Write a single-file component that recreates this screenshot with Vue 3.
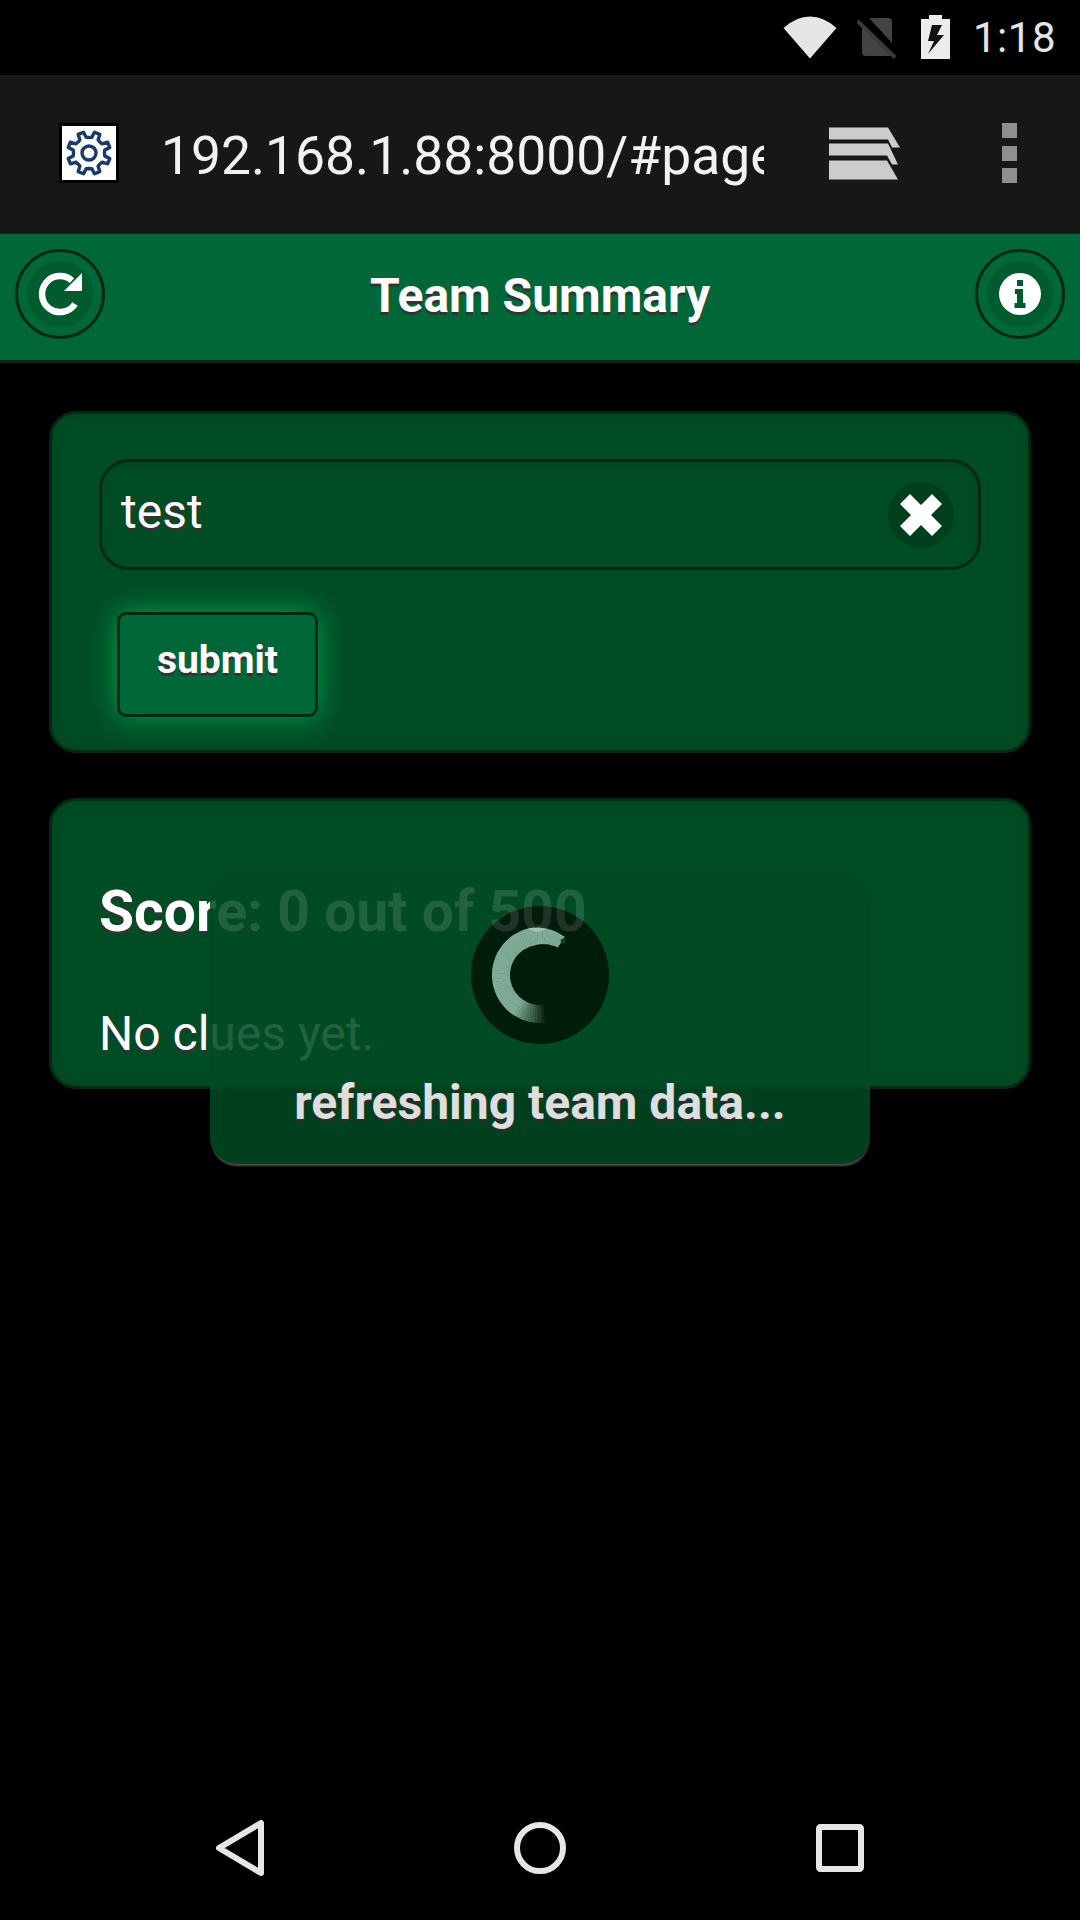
<script setup>
const gearPoints = (() => {
  const pts = []
  const teeth = 8
  for (let i = 0; i < teeth; i++) {
    const a = (i / teeth) * Math.PI * 2 + Math.PI / 8
    const step = (Math.PI * 2) / teeth
    const profile = [
      [-0.5, 15.5],
      [-0.27, 16],
      [-0.17, 21.5],
      [0.17, 21.5],
      [0.27, 16],
    ]
    for (const [d, r] of profile) {
      const t = a + d * step
      pts.push(`${(30 + r * Math.cos(t)).toFixed(2)},${(29 + r * Math.sin(t)).toFixed(2)}`)
    }
  }
  return pts.join(' ')
})()

const spinnerSegments = (() => {
  const segs = []
  const n = 60
  const start = 33
  const end = -186
  const r = 39
  const cx = 69
  const cy = 69
  for (let i = 0; i < n; i++) {
    const a0 = start + ((end - start) * i) / n
    const a1 = start + ((end - start) * (i + 1.15)) / n
    const toXY = (a) => {
      const rad = (a * Math.PI) / 180
      return [cx + r * Math.sin(rad), cy - r * Math.cos(rad)]
    }
    const p0 = toXY(a0)
    const p1 = toXY(a1)
    const f = i / n
    const opacity = f > 0.8 ? Math.max(0.05, 1 - (f - 0.8) / 0.2) : 1
    const width = 13 + Math.min(f * 5, 1) * 5
    segs.push({
      d: `M${p0[0].toFixed(2)} ${p0[1].toFixed(2)} A${r} ${r} 0 0 0 ${p1[0].toFixed(2)} ${p1[1].toFixed(2)}`,
      opacity,
      width,
    })
  }
  return segs
})()
</script>

<template>
  <div class="screen">
    <div class="status">
      <svg class="st-wifi" width="54" height="43" viewBox="0 0 54 43">
        <path d="M27 42.5 L0.5 12 Q13 0.5 27 0.5 Q41 0.5 53.5 12 Z" fill="#e6e6e6" />
      </svg>
      <svg class="st-sim" width="40" height="44" viewBox="0 0 40 44">
        <path d="M5 9 L5 36 Q5 40 9 40 L31 40 Q35 40 35 37 Z M12 2 L31 2 Q35 2 35 6 L35 27 Z" fill="#444" />
        <path d="M0.5 5 L38 41.5" stroke="#3a3a3a" stroke-width="4" />
      </svg>
      <svg class="st-batt" width="29" height="44" viewBox="0 0 29 44">
        <path d="M8 0 H21 V4 H29 V44 H0 V4 H8 Z" fill="#ececec" />
        <path d="M21 10 H11 L7 26 H13 L7 39 L23 20 H16 Z" fill="#111" />
      </svg>
      <span class="st-time">1:18</span>
    </div>

    <div class="chrome">
      <div class="favicon">
        <svg width="54" height="54" viewBox="3 2 54 54">
          <polygon :points="gearPoints" fill="none" stroke="#1b3a6b" stroke-width="3.4" stroke-linejoin="round" />
          <circle cx="30" cy="29" r="7" fill="none" stroke="#1b3a6b" stroke-width="3.4" />
        </svg>
      </div>
      <div class="url">192.168.1.88:8000/#page</div>
      <svg class="tabs" width="72" height="55" viewBox="0 0 72 54">
        <path d="M0 1 H59 L71 21 H63 L59 13 H0 Z" fill="#ccc" />
        <path d="M0 17 H59 L69 38 H63 L58 29 H0 Z" fill="#ccc" />
        <path d="M0 34 H58 L69 53 H0 Z" fill="#ccc" />
      </svg>
      <div class="menu"><i></i><i></i><i></i></div>
    </div>

    <header class="header">
      <div class="round-btn">
        <svg width="84" height="84" viewBox="3 3 84 84">
          <circle cx="45" cy="45" r="33" fill="#005c2e" />
          <path d="M60 55 A18 18 0 1 1 57 31.6" fill="none" stroke="#fff" stroke-width="6.5" />
          <path d="M67 24 V42 H49 Z" fill="#fff" />
        </svg>
      </div>
      <h1 class="title">Team Summary</h1>
      <div class="round-btn">
        <svg width="84" height="84" viewBox="3 3 84 84">
          <circle cx="45" cy="45" r="33" fill="#005c2e" />
          <circle cx="45" cy="45" r="21" fill="#fff" />
          <path d="M42 31 H48 V37 H42 Z M40 40 H48 V54 H50.5 V59 H39.5 V54 H42 V45 H40 Z" fill="#005c2e" />
        </svg>
      </div>
    </header>

    <main class="content">
      <section class="card form-card">
        <div class="input">
          <span class="input-text">test</span>
          <span class="clear">
            <svg width="42" height="42" viewBox="0 0 42 42">
              <path d="M10 0 L21 11 L32 0 L42 10 L31 21 L42 32 L32 42 L21 31 L10 42 L0 32 L11 21 L0 10 Z" fill="#fff" />
            </svg>
          </span>
        </div>
        <button class="submit">submit</button>
      </section>

      <section class="card score-card">
        <h2 class="score">Score: 0 out of 500</h2>
        <p class="clues">No clues yet.</p>
      </section>
    </main>

    <nav class="nav">
      <svg width="52" height="60" viewBox="0 0 52 60">
        <path d="M47 5 V55 L5 30 Z" fill="none" stroke="#e6e6e6" stroke-width="6" stroke-linejoin="round" />
      </svg>
      <svg width="52" height="52" viewBox="0 0 52 52">
        <circle cx="26" cy="26" r="23" fill="none" stroke="#e6e6e6" stroke-width="6" />
      </svg>
      <svg width="48" height="48" viewBox="0 0 48 48">
        <rect x="3" y="3" width="42" height="42" rx="1.5" fill="none" stroke="#e6e6e6" stroke-width="6" />
      </svg>
    </nav>

    <div class="loader">
      <div class="spinner">
        <svg width="138" height="138" viewBox="0 0 138 138">
          <path
            v-for="(s, i) in spinnerSegments"
            :key="i"
            :d="s.d"
            fill="none"
            stroke="#93bba9"
            :stroke-width="s.width"
            :opacity="s.opacity"
          />
          <circle cx="92" cy="35" r="2.5" fill="#1d3a2c" />
        </svg>
      </div>
      <div class="loader-text">refreshing team data...</div>
    </div>
  </div>
</template>

<style scoped>
.screen {
  position: relative;
  width: 1080px;
  height: 1920px;
  background: #000;
  display: flex;
  flex-direction: column;
  overflow: hidden;
  font-family: Roboto, "Liberation Sans", sans-serif;
  color: #fff;
}
.status {
  height: 75px;
  flex: none;
  display: flex;
  align-items: center;
  justify-content: flex-end;
  padding-right: 24px;
  box-sizing: border-box;
}
.st-wifi { margin-right: 20px; margin-top: -1px; }
.st-sim { margin-right: 24px; }
.st-batt { margin-right: 23px; margin-top: -1px; }
.st-time {
  font-size: 42px;
  line-height: 75px;
  color: #e6e6e6;
  letter-spacing: 0.5px;
}
.chrome {
  height: 158px;
  flex: none;
  background: #171717;
  display: flex;
  align-items: center;
  box-sizing: border-box;
  padding-left: 59px;
}
.favicon {
  width: 60px;
  height: 60px;
  box-sizing: border-box;
  border: 3px solid #000;
  background: #fff;
  display: flex;
  flex: none;
  align-items: center;
  justify-content: center;
  margin-top: -2px;
}
.url {
  margin-left: 42px;
  width: 603px;
  flex: none;
  overflow: hidden;
  white-space: nowrap;
  font-size: 53.4px;
  font-weight: 400;
  line-height: 70px;
  margin-top: 4px;
  color: #f2f2f2;
}
.tabs { margin-left: 65px; flex: none; margin-top: -2px; }
.menu {
  margin-left: 101px;
  display: flex;
  flex-direction: column;
  gap: 7.5px;
  margin-top: -2px;
}
.menu i {
  display: block;
  width: 15px;
  height: 15px;
  background: #8f8f8f;
}
.header {
  height: 130px;
  flex: none;
  box-sizing: border-box;
  background: #006838;
  border-top: 1px solid #00331a;
  border-bottom: 3px solid #002b12;
  display: flex;
  align-items: center;
  justify-content: space-between;
  padding: 0 15px 6px;
}
.round-btn {
  width: 90px;
  height: 90px;
  box-sizing: border-box;
  border: 3px solid #002b12;
  border-radius: 50%;
}
.round-btn svg { display: block; }
.title {
  margin: 4px 0 0;
  font-size: 48px;
  font-weight: 700;
  line-height: 60px;
  text-shadow: 0 3px 0 #333;
}
.content {
  flex: none;
  padding: 48px 49px 0;
  display: flex;
  flex-direction: column;
  gap: 45px;
}
.card {
  box-sizing: border-box;
  background: #004c25;
  border: 3px solid #002b12;
  border-radius: 27px;
  box-shadow: inset 0 0 12px rgba(0, 40, 16, 0.2);
}
.form-card {
  height: 342px;
  padding: 45px 47px 0;
}
.input {
  height: 111px;
  box-sizing: border-box;
  border: 3px solid #002b12;
  border-radius: 30px;
  box-shadow: inset 0 3px 6px rgba(0, 0, 0, 0.12);
  display: flex;
  align-items: center;
  justify-content: space-between;
  padding: 0 24px 0 19px;
}
.input-text {
  font-size: 48px;
  line-height: 60px;
  margin-top: -6px;
  text-shadow: 0 3px 0 #333;
}
.clear {
  width: 66px;
  height: 66px;
  border-radius: 50%;
  background: #003f1d;
  display: flex;
  align-items: center;
  justify-content: center;
}
.submit {
  display: block;
  margin: 42px 0 0 18px;
  width: 201px;
  height: 105px;
  box-sizing: border-box;
  padding: 0 0 9px;
  background: #006838;
  border: 3px solid #002b12;
  border-radius: 9px;
  box-shadow: 0 0 30px #00a050;
  color: #fff;
  font-family: inherit;
  font-size: 39px;
  font-weight: 700;
  text-shadow: 0 3px 0 #333;
}
.score-card {
  height: 291px;
  padding: 0 47px;
  overflow: hidden;
}
.score {
  margin: 79px 0 0;
  font-size: 57px;
  font-weight: 700;
  line-height: 64px;
  text-shadow: 0 3px 0 #333;
}
.clues {
  margin: 60px 0 0;
  font-size: 48px;
  line-height: 60px;
  text-shadow: 0 3px 0 #333;
}
.nav {
  margin-top: auto;
  height: 144px;
  flex: none;
  display: grid;
  grid-template-columns: repeat(3, 300px);
  justify-content: center;
  justify-items: center;
  align-items: center;
}
.loader {
  position: absolute;
  left: 210px;
  top: 875px;
  width: 660px;
  height: 289px;
  box-sizing: border-box;
  background: #004a24;
  border-radius: 27px;
  box-shadow: 0 3px 2px -1px rgba(255, 255, 255, 0.35);
  opacity: 0.87;
  display: flex;
  flex-direction: column;
  align-items: center;
  padding-top: 31px;
}
.spinner {
  width: 138px;
  height: 138px;
  border-radius: 50%;
  background: #001508;
}
.spinner svg { display: block; }
.loader-text {
  margin-top: 29px;
  font-size: 48px;
  font-weight: 700;
  line-height: 60px;
  text-shadow: 0 3px 0 #333;
}
</style>

<style>
html, body { background: #000; }
</style>
